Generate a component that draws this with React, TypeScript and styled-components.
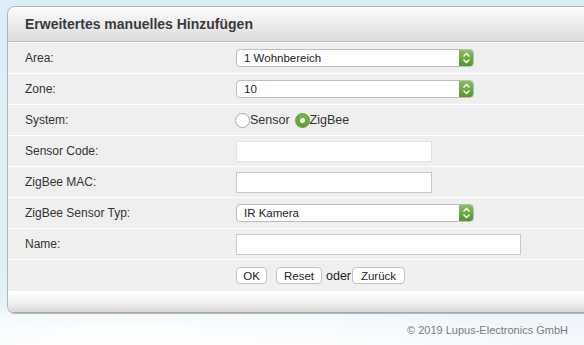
import styled, { createGlobalStyle } from "styled-components";

const GlobalStyle = createGlobalStyle`
  html, body {
    margin: 0;
    padding: 0;
    height: 100%;
  }
  body {
    font-family: "Liberation Sans", Arial, Helvetica, sans-serif;
    color: #333;
    overflow: hidden;
    background:
      radial-gradient(ellipse 420px 40px at 120px 338px, rgba(255,255,255,0.95), rgba(255,255,255,0) 100%),
      radial-gradient(ellipse 700px 60px at 300px 352px, rgba(255,255,255,0.8), rgba(255,255,255,0) 100%),
      linear-gradient(180deg, #dbedf7 0%, #e1f0f8 80%, #eaf4fa 100%);
  }
`;

const Page = styled.div`
  box-sizing: border-box;
  padding: 6px 0 0 7px;
  width: 584px;
`;

const Panel = styled.div`
  border: 1px solid #b4b4b4;
  border-right: none;
  border-radius: 8px 0 0 8px;
  overflow: hidden;
  background: #efefef;
`;

const Header = styled.div`
  height: 34px;
  display: flex;
  align-items: center;
  padding-left: 17px;
  background: linear-gradient(180deg, #fcfcfc 0%, #e9e9e9 60%, #dcdcdc 100%);
  border-bottom: 1px solid #bdbdbd;
  box-shadow: 0 1px 0 #fff;
  font-size: 14px;
  font-weight: bold;
  color: #3a3a3a;
`;

const Form = styled.div`
  display: flex;
  flex-direction: column;
  margin-top: 1px;
`;

const Row = styled.div<{ $last?: boolean }>`
  display: grid;
  grid-template-columns: 211px 1fr;
  align-items: center;
  height: ${(p) => (p.$last ? "31px" : "30px")};
  border-bottom: ${(p) => (p.$last ? "none" : "1px solid #fff")};
  padding-left: 17px;
  font-size: 12px;
`;

const Label = styled.span`
  color: #333;
`;

const Field = styled.div`
  display: flex;
  align-items: center;
`;

const Select = styled.div`
  position: relative;
  box-sizing: border-box;
  width: 238px;
  height: 18px;
  border: 1px solid #bdbdbd;
  border-radius: 4px;
  background: #fff;
  display: flex;
  align-items: center;
  padding-left: 7px;
  font-size: 11.5px;
  color: #222;
  overflow: hidden;
`;

const SelectArrow = styled.div`
  position: absolute;
  top: -1px;
  right: -1px;
  bottom: -1px;
  width: 15px;
  border-radius: 0 4px 4px 0;
  background: linear-gradient(180deg, #8cc267 0%, #66a83e 55%, #4e9428 100%);
  display: flex;
  align-items: center;
  justify-content: center;
`;

const TextInput = styled.div<{ $w: number; $muted?: boolean }>`
  box-sizing: border-box;
  width: ${(p) => p.$w}px;
  height: 21px;
  background: #fff;
  border: 1px solid ${(p) => (p.$muted ? "#e2e2e2" : "#c8c8c8")};
`;

const Radio = styled.span<{ $on?: boolean }>`
  box-sizing: border-box;
  width: 15px;
  height: 15px;
  border-radius: 50%;
  border: 1px solid ${(p) => (p.$on ? "#5d9f36" : "#a9a9a9")};
  background: ${(p) => (p.$on ? "linear-gradient(180deg,#7ab651,#5c9e35)" : "#fff")};
  display: inline-flex;
  align-items: center;
  justify-content: center;
  margin-left: -1px;
  &::after {
    content: "";
    display: ${(p) => (p.$on ? "block" : "none")};
    width: 5px;
    height: 5px;
    border-radius: 50%;
    background: #fff;
  }
`;

const RadioText = styled.span`
  margin-right: 6px;
  font-size: 12.5px;
  color: #333;
`;

const Button = styled.span<{ $w: number; $gap?: number }>`
  box-sizing: border-box;
  width: ${(p) => p.$w}px;
  height: 17px;
  margin-left: ${(p) => p.$gap ?? 0}px;
  border: 1px solid #c2c2c2;
  border-radius: 4px;
  background: #fff;
  display: inline-flex;
  align-items: center;
  justify-content: center;
  font-size: 11.5px;
  color: #222;
`;

const Or = styled.span`
  margin: 0 1px 0 4px;
  font-size: 12.5px;
  color: #222;
`;

const PanelFooter = styled.div`
  height: 21px;
  background: linear-gradient(180deg, #ffffff 0%, #f5f5f5 45%, #d9d9d9 100%);
  border-bottom: 1px solid #a9a9a9;
`;

const Copyright = styled.div`
  text-align: right;
  padding: 10px 16px 0 0;
  font-size: 11px;
  color: #7b7b7b;
`;

const Chevron = () => (
  <svg width="9" height="12" viewBox="0 0 9 12">
    <path d="M1.5 4.5 L4.5 1.5 L7.5 4.5 M1.5 7.5 L4.5 10.5 L7.5 7.5" fill="none" stroke="#fff" strokeWidth="1.4" />
  </svg>
);

const Dropdown = ({ value }: { value: string }) => (
  <Select>
    {value}
    <SelectArrow>
      <Chevron />
    </SelectArrow>
  </Select>
);

export default function App() {
  return (
    <>
      <GlobalStyle />
      <Page>
        <Panel>
          <Header>Erweitertes manuelles Hinzufügen</Header>
          <Form>
            <Row>
              <Label>Area:</Label>
              <Field><Dropdown value="1 Wohnbereich" /></Field>
            </Row>
            <Row>
              <Label>Zone:</Label>
              <Field><Dropdown value="10" /></Field>
            </Row>
            <Row>
              <Label>System:</Label>
              <Field>
                <Radio />
                <RadioText>Sensor</RadioText>
                <Radio $on />
                <RadioText>ZigBee</RadioText>
              </Field>
            </Row>
            <Row>
              <Label>Sensor Code:</Label>
              <Field><TextInput $w={196} $muted /></Field>
            </Row>
            <Row>
              <Label>ZigBee MAC:</Label>
              <Field><TextInput $w={196} /></Field>
            </Row>
            <Row>
              <Label>ZigBee Sensor Typ:</Label>
              <Field><Dropdown value="IR Kamera" /></Field>
            </Row>
            <Row>
              <Label>Name:</Label>
              <Field><TextInput $w={285} /></Field>
            </Row>
            <Row $last>
              <span />
              <Field>
                <Button $w={31}>OK</Button>
                <Button $w={46} $gap={9}>Reset</Button>
                <Or>oder</Or>
                <Button $w={53}>Zurück</Button>
              </Field>
            </Row>
          </Form>
          <PanelFooter />
        </Panel>
        <Copyright>© 2019 Lupus-Electronics GmbH</Copyright>
      </Page>
    </>
  );
}
